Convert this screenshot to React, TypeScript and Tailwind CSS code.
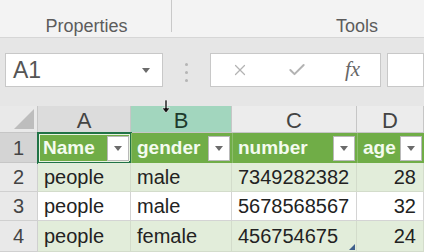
import React from "react";
import { X, Check } from "lucide-react";

const cols = ["A", "B", "C", "D"];
const heads = ["Name", "gender", "number", "age"];
const rows = [
  ["people", "male", "7349282382", "28"],
  ["people", "male", "5678568567", "32"],
  ["people", "female", "456754675", "24"],
];

const Caret = () => (
  <svg width="8" height="5" viewBox="0 0 8 5">
    <path d="M0 0 L8 0 L4 5 Z" fill="#6b6b6b" />
  </svg>
);

const FilterButton = () => (
  <div className="ml-auto mr-[2px] flex h-[25px] w-[22px] shrink-0 items-center justify-center border border-[#b9b9b9] bg-white">
    <Caret />
  </div>
);

const App = () => {
  return (
    <div className="relative h-[252px] w-[424px] overflow-hidden bg-[#e6e6e6] font-['Liberation_Sans',sans-serif]">
      {/* ribbon group labels */}
      <div className="flex h-[38px] border-b border-[#d6d6d6] bg-[#f3f3f3] text-[18px] leading-[18px] text-[#5c5c5c]">
        <div className="flex w-[171px] items-start justify-center pl-[2px] pt-[17px]">Properties</div>
        <div className="h-[32px] w-px bg-[#c9c9c9]" />
        <div className="flex flex-1 items-start justify-end pr-[46px] pt-[17px]">Tools</div>
      </div>

      {/* name box + formula bar */}
      <div className="flex h-[68px] items-start pt-[15px]">
        <div className="ml-[5px] flex h-[34px] w-[158px] items-center border border-[#c8c8c8] bg-white pl-[7px] pr-[12px] text-[23px] text-[#555]">
          <span>A1</span>
          <span className="ml-auto">
            <Caret />
          </span>
        </div>
        <div className="flex w-[47px] flex-col items-center gap-[5px] pt-[10px]">
          <div className="h-[3px] w-[3px] rounded-full bg-[#b5b5b5]" />
          <div className="h-[3px] w-[3px] rounded-full bg-[#b5b5b5]" />
          <div className="h-[3px] w-[3px] rounded-full bg-[#b5b5b5]" />
        </div>
        <div className="flex h-[34px] w-[171px] items-center border border-[#c8c8c8] bg-white">
          <div className="ml-[20px] w-[18px]">
            <X size={18} strokeWidth={1.6} color="#b3b3b3" />
          </div>
          <div className="ml-[38px] w-[20px]">
            <Check size={20} strokeWidth={2.4} color="#b3b3b3" />
          </div>
          <div className="ml-[38px] font-['Liberation_Serif',serif] text-[21px] italic text-[#666]">fx</div>
        </div>
        <div className="ml-[6px] h-[34px] flex-1 border border-[#c8c8c8] bg-white" />
      </div>

      {/* grid */}
      <div className="grid grid-cols-[38px_93px_101px_125px_67px] grid-rows-[27px_30px_29px_29px_31px] bg-white">
        <div className="flex items-end justify-end border-b border-r border-[#c6c6c6] bg-[#e9e9e9] pb-[3px] pr-[3px]">
          <svg width="20" height="20" viewBox="0 0 20 20">
            <path d="M20 0 L20 20 L0 20 Z" fill="#bdbdbd" />
          </svg>
        </div>
        {cols.map((c, i) => (
          <div
            key={c}
            className={
              "flex items-center justify-center border-b border-r border-[#c6c6c6] pt-[2px] text-[22px] " +
              (i === 1
                ? "bg-[#a2d6be] text-[#1d3b2c]"
                : i === 0
                ? "bg-[#dcdcdc] text-[#444]"
                : "bg-[#ececec] text-[#444]")
            }
          >
            {c}
          </div>
        ))}

        <div className="flex items-center justify-center border-b border-r border-[#c6c6c6] bg-[#d4d4d4] text-[20px] text-[#444]">
          1
        </div>
        {heads.map((h, i) => (
          <div
            key={h}
            className={
              "relative flex items-center bg-[#70ad47] pl-[5px] text-[19px] font-bold text-[#f4fbef] " +
              (i === 0 ? "" : "border-l border-[#8cbd6d]")
            }
          >
            <span>{h}</span>
            <FilterButton />
            {i === 0 && (
              <>
                <div className="pointer-events-none absolute inset-[-1px] border-2 border-[#217346]" />
                <div className="pointer-events-none absolute inset-[1px] border border-[#e8f3e0]" />
                <div className="absolute bottom-[-3px] right-[-3px] h-[5px] w-[5px] bg-[#217346]" />
              </>
            )}
          </div>
        ))}

        {rows.map((r, ri) => (
          <React.Fragment key={ri}>
            <div className="flex items-center justify-center border-b border-r border-[#d0d0d0] bg-[#e9e9e9] text-[20px] text-[#444]">
              {ri + 2}
            </div>
            {r.map((v, ci) => (
              <div
                key={ci}
                className={
                  "relative flex items-center border-r text-[20px] text-[#222] " +
                  (ci === 3 ? "justify-end pr-[7px] " : "pl-[6px] ") +
                  (ri === 1
                    ? "border-b border-[#d4d4d4] bg-white"
                    : "border-b border-[#d3dccb] bg-[#e2edda]")
                }
              >
                {v}
                {ri === 2 && ci === 2 && (
                  <svg className="absolute bottom-[1px] right-[1px]" width="6" height="6" viewBox="0 0 6 6">
                    <path d="M6 0 L6 6 L0 6 Z" fill="#3e5f8a" />
                  </svg>
                )}
              </div>
            ))}
          </React.Fragment>
        ))}
      </div>

      {/* column select cursor */}
      <svg className="absolute left-[161px] top-[100px]" width="10" height="14" viewBox="0 0 10 14">
        <path d="M4 0 H6 V8 H9 L5 13 L1 8 H4 Z" fill="#111" stroke="#fff" strokeWidth="0.6" />
      </svg>
    </div>
  );
};

export default App;
